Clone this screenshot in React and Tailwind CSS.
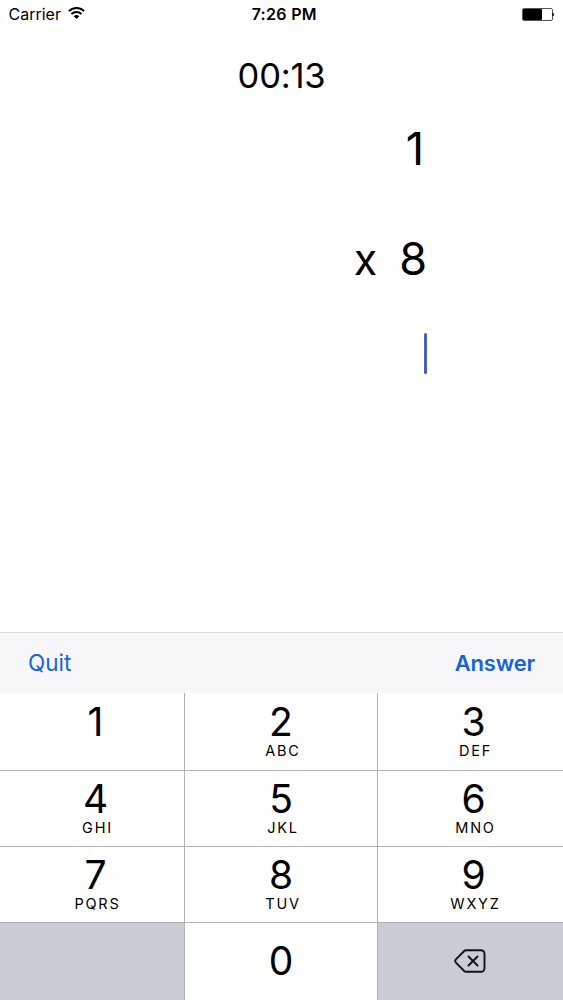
const keys = [
  { digit: '1', letters: '' },
  { digit: '2', letters: 'ABC' },
  { digit: '3', letters: 'DEF' },
  { digit: '4', letters: 'GHI' },
  { digit: '5', letters: 'JKL' },
  { digit: '6', letters: 'MNO' },
  { digit: '7', letters: 'PQRS' },
  { digit: '8', letters: 'TUV' },
  { digit: '9', letters: 'WXYZ' },
];

function StatusBar() {
  return (
    <header className="grid h-[28px] grid-cols-3 items-center pl-[8.5px] pr-[9px] text-[16px] leading-none">
      <div className="flex items-center gap-[7px]">
        <span>Carrier</span>
        <svg className="mb-[2px]" width="17" height="12" viewBox="0 0 17 12" fill="none" stroke="black" strokeWidth="2">
          <path d="M.8 4.1a11 11 0 0 1 15.4 0" />
          <path d="M3.5 7a7 7 0 0 1 10 0" />
          <path d="M8.5 12 5.7 9.3a4 4 0 0 1 5.6 0z" fill="black" stroke="none" />
        </svg>
      </div>
      <span className="pl-[6px] text-center font-semibold tracking-[0.3px]">7:26 PM</span>
      <svg className="justify-self-end" width="32" height="13" viewBox="0 0 32 13">
        <rect x="0.5" y="0.5" width="30" height="12" rx="1.5" fill="white" stroke="#555" />
        <rect x="1" y="1" width="19" height="11" rx="1" fill="black" />
        <path d="M30.500 4.500q1.500.3 1.500 2t-1.500 2z" fill="black" />
      </svg>
    </header>
  );
}

export default function App() {
  return (
    <main className="flex h-[1000px] w-[563px] flex-col overflow-hidden bg-white font-['Inter',sans-serif] text-black">
      <StatusBar />

      <section className="flex flex-1 flex-col">
        <time className="mt-[27px] text-center text-[34.5px] leading-[42px] tracking-[-0.2px]">00:13</time>
        <div className="flex flex-col items-end pr-[136px] text-[45px] leading-[56px]">
          <span className="mt-[24px] pr-[3px]">1</span>
          <div className="mt-[54px] flex gap-[22px]">
            <span className="text-[43px]">x</span>
            <span>8</span>
          </div>
          <span className="mt-[46px] h-[41px] w-[3px] rounded-full bg-[#4a5cc8]" />
        </div>
      </section>

      <nav className="flex h-[61px] items-center justify-between border-t border-[#dcdce0] bg-[#f7f6f9] px-[28px] text-[22.5px] text-[#1764d8]">
        <button>Quit</button>
        <button className="text-[22px] font-semibold tracking-[-0.2px]">Answer</button>
      </nav>

      <div className="grid h-[307px] grid-cols-[185px_193px_185px] grid-rows-[78px_76px_76px_77px]">
        {keys.map((key) => (
          <button
            key={key.digit}
            className="flex flex-col items-center border-b border-r border-[#b2b2b4] pt-[7px] nth-[3n]:border-r-0 nth-[3n]:pl-[6px] nth-[3n+1]:pl-[7px] nth-[-n+3]:pt-[8px]"
          >
            <span className="text-[39px] leading-[41px]">{key.digit}</span>
            {key.letters && (
              <span className="pl-[4px] text-[14.5px] leading-[17px] tracking-[1.8px]">{key.letters}</span>
            )}
          </button>
        ))}
        <div className="border-r border-[#b2b2b4] bg-[#c9cbd5]" />
        <button className="border-r border-[#b2b2b4] text-[39px]">0</button>
        <button className="flex items-center justify-center bg-[#c9cbd5]">
          <svg
            className="mb-[2px] mr-px"
            width="32"
            height="24"
            viewBox="0 0 32 24"
            fill="none"
            stroke="#10121a"
            strokeWidth="1.9"
            strokeLinecap="round"
            strokeLinejoin="round"
          >
            <path d="M12 1.2h15a3.5 3.5 0 0 1 3.5 3.5v14.6a3.5 3.5 0 0 1-3.5 3.5H12q-1 0-1.8-.8l-8.3-8.4q-1.4-1.6 0-3.2L10.2 2Q11 1.2 12 1.2z" />
            <path d="m14.5 7.500 9 9M23.5 7.500l-9 9" />
          </svg>
        </button>
      </div>
    </main>
  );
}
